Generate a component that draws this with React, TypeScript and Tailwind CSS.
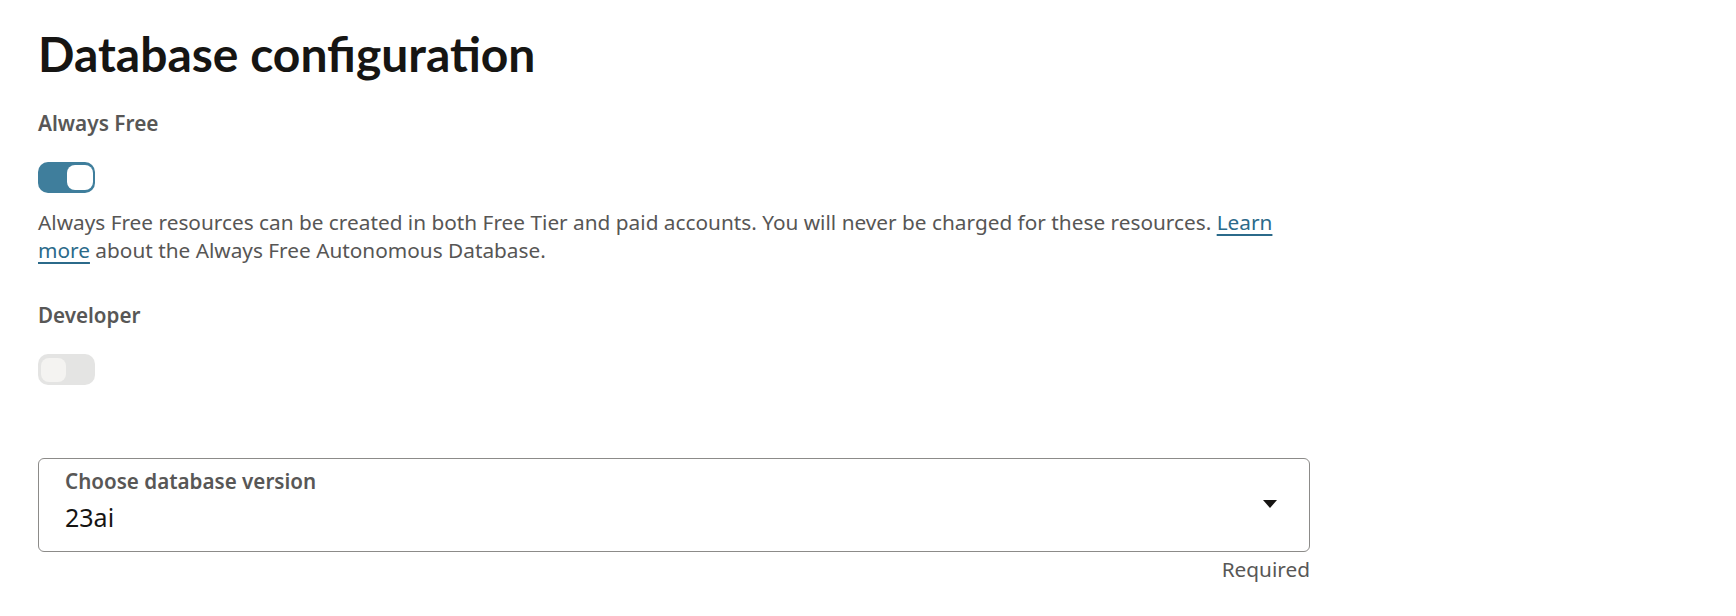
import React from "react";

export default function App() {
  return (
    <div className="min-h-screen bg-white font-['Noto_Sans',sans-serif] text-[#161513]">
      <div className="w-[1272px] ml-[38px] pt-[30px]">
        <h1 className="font-['Lato',sans-serif] text-[48px] leading-[48px] font-bold text-[#161513]">Database configuration</h1>

        <div className="mt-[33px] text-[20.8px] leading-[24px] font-semibold text-[#585756]">Always Free</div>
        <div className="mt-[27px] flex h-[31px] w-[57px] items-center justify-end rounded-[10px] bg-[#3f7e9c] pr-[2px]">
          <div className="h-[25px] w-[26px] rounded-[8px] bg-white" />
        </div>
        <p className="mt-[15px] text-[20.8px] leading-[28px] text-[#575655]">
          Always Free resources can be created in both Free Tier and paid accounts. You will never be charged for these resources.{" "}
          <a href="#" className="text-[#2b6a8a] underline decoration-2 underline-offset-[4px]">
            Learn more
          </a>{" "}
          about the Always Free Autonomous Database.
        </p>

        <div className="mt-[39px] text-[20.6px] leading-[24px] font-semibold text-[#585756]">Developer</div>
        <div className="mt-[27px] flex h-[31px] w-[57px] items-center rounded-[10px] bg-[#e4e4e3] pl-[3px]">
          <div className="h-[24px] w-[25px] rounded-[8px] bg-[#f4f3f1]" />
        </div>

        <div className="mt-[73px] flex h-[94px] items-center rounded-[6px] border border-[#8c8b89] pl-[26px] pr-[32px]">
          <div className="flex-1 self-start pt-[10px]">
            <div className="text-[20.6px] leading-[24px] font-semibold text-[#585756]">Choose database version</div>
            <div className="mt-[10px] text-[25px] leading-[28px] text-[#161513]">23ai</div>
          </div>
          <svg width="14" height="8" viewBox="0 0 14 8" className="mb-[2px]">
            <path d="M0 0 L14 0 L7 8 Z" fill="#161513" />
          </svg>
        </div>
        <div className="mt-[5px] text-right text-[20.8px] leading-[24px] text-[#585756]">Required</div>
      </div>
    </div>
  );
}
